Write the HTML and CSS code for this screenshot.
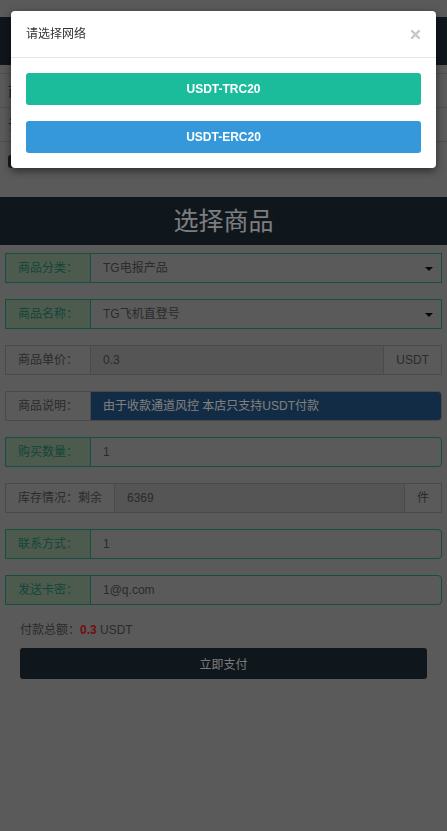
FILE: index.html
```html
<!DOCTYPE html>
<html lang="zh-CN">
<head>
    <meta charset="UTF-8">
    <meta name="viewport" content="width=device-width, initial-scale=1.0">
    <title>选择商品</title>
    <link rel="stylesheet" href="styles.css">
</head>
<body>
    <header class="topbar"></header>

    <ul class="menu">
        <li>商品购买</li>
        <li>订单查询</li>
    </ul>
    <div class="notice"><span class="tag">公告</span></div>

    <h2 class="banner">选择商品</h2>

    <form class="order-form">
        <div class="field field-green">
            <span class="field-label">商品分类：</span>
            <div class="field-select">TG电报产品<span class="caret"></span></div>
        </div>

        <div class="field field-green">
            <span class="field-label">商品名称：</span>
            <div class="field-select">TG飞机直登号<span class="caret"></span></div>
        </div>

        <div class="field">
            <span class="field-label">商品单价：</span>
            <input class="field-input readonly" type="text" value="0.3" readonly>
            <span class="field-addon">USDT</span>
        </div>

        <div class="field rounded">
            <span class="field-label">商品说明：</span>
            <div class="field-desc">由于收款通道风控 本店只支持USDT付款</div>
        </div>

        <div class="field field-green rounded">
            <span class="field-label">购买数量：</span>
            <input class="field-input" type="text" value="1">
        </div>

        <div class="field">
            <span class="field-label">库存情况：剩余</span>
            <input class="field-input readonly" type="text" value="6369" readonly>
            <span class="field-addon">件</span>
        </div>

        <div class="field field-green rounded">
            <span class="field-label">联系方式：</span>
            <input class="field-input" type="text" value="1">
        </div>

        <div class="field field-green rounded">
            <span class="field-label">发送卡密：</span>
            <input class="field-input" type="text" value="1@q.com">
        </div>

        <div class="pay-box">
            <p class="total">付款总额：<b class="amount">0.3</b> USDT</p>
            <button type="button" class="pay-btn">立即支付</button>
        </div>
    </form>

    <!-- network picker popup -->
    <div class="backdrop"></div>
    <div class="modal">
        <div class="modal-header">
            <span class="modal-title">请选择网络</span>
            <span class="modal-close">
                <svg width="9" height="9" viewBox="0 0 9 9">
                    <path d="M1 1 L8 8 M8 1 L1 8" stroke="#c8c8c8" stroke-width="2.4" stroke-linecap="square"/>
                </svg>
            </span>
        </div>
        <div class="modal-body">
            <button type="button" class="net-btn trc">USDT-TRC20</button>
            <button type="button" class="net-btn erc">USDT-ERC20</button>
        </div>
    </div>
</body>
</html>
```

FILE: styles.css
```css
:root {
    --page-bg: #b4b4b4;
    --dark: #1e2c38;
    --green: #2a9e80;
    --green-text: #268c71;
    --green-bg: #9ab69e;
    --gray-border: #949494;
    --text-color: #565656;
}

* {
    box-sizing: border-box;
}

body {
    font-family: "Liberation Sans", "Noto Sans CJK SC", sans-serif;
    font-size: 12px;
    color: var(--text-color);
    background-color: var(--page-bg);
    margin: 0;
    min-height: 100vh;
}

.topbar {
    margin-top: 17px;
    height: 48px;
    background-color: var(--dark);
}

.menu {
    list-style: none;
    margin: 8px 0 0;
    padding: 0;
    border-top: 1px solid #9c9c9c;
}

.menu li {
    height: 34px;
    line-height: 34px;
    padding-left: 8px;
    font-size: 14px;
    color: #333;
    border-bottom: 1px solid #9c9c9c;
}

.notice {
    padding: 12px 8px 0;
    height: 25px;
}

.tag {
    display: inline-block;
    height: 13px;
    line-height: 13px;
    padding: 0 6px;
    font-size: 10px;
    color: #fff;
    background-color: #333;
    border-radius: 3px;
}

.banner {
    margin: 30px 0 0;
    height: 48px;
    line-height: 48px;
    text-align: center;
    font-size: 25px;
    font-weight: normal;
    color: #f8faff;
    background-color: var(--dark);
}

.order-form {
    padding: 8px 5px 0;
}

.field {
    display: flex;
    height: 30px;
    margin-bottom: 16px;
    border: 1px solid var(--gray-border);
    line-height: 28px;
}

.field.rounded {
    border-radius: 0 4px 4px 0;
}

.field-label {
    padding: 0 12px;
    white-space: nowrap;
    border-right: 1px solid var(--gray-border);
}

.field-green {
    border-color: var(--green);
}

.field-green .field-label {
    color: var(--green-text);
    background-color: var(--green-bg);
    border-right-color: var(--green);
}

.field-select {
    flex: 1;
    position: relative;
    padding: 0 12px;
}

.caret {
    position: absolute;
    right: 8px;
    top: 13px;
    border-left: 4px solid transparent;
    border-right: 4px solid transparent;
    border-top: 4px solid #111;
}

.field-input {
    flex: 1;
    min-width: 0;
    height: 100%;
    padding: 0 12px;
    border: none;
    outline: none;
    font: inherit;
    color: var(--text-color);
    background: transparent;
}

.field-input.readonly {
    background-color: #aaa;
}

.field-addon {
    padding: 0 12px;
    border-left: 1px solid var(--gray-border);
}

.field-desc {
    flex: 1;
    padding: 0 12px;
    color: #fff;
    background-color: #26588a;
    border-radius: 0 3px 3px 0;
}

.pay-box {
    padding: 0 15px;
}

.total {
    margin: 15px 0 0;
    line-height: 18px;
}

.amount {
    color: #e02020;
}

.pay-btn {
    display: block;
    width: 100%;
    height: 31px;
    margin-top: 9px;
    border: none;
    border-radius: 3px;
    font: inherit;
    color: #f4f4f4;
    background-color: var(--dark);
}

.backdrop {
    position: fixed;
    inset: 0;
    background-color: rgba(0, 0, 0, 0.5);
}

.modal {
    position: absolute;
    top: 11px;
    left: 11px;
    right: 11px;
    background: #fff;
    border-radius: 4px;
    box-shadow: 0 3px 9px rgba(0, 0, 0, 0.5);
}

.modal-header {
    display: flex;
    align-items: center;
    justify-content: space-between;
    padding: 15px 16px 15px 15px;
    border-bottom: 1px solid #e5e5e5;
}

.modal-title {
    font-size: 12px;
    line-height: 16px;
    color: #333;
}

.modal-close {
    display: flex;
    cursor: pointer;
}

.modal-body {
    display: flex;
    flex-direction: column;
    gap: 16px;
    padding: 15px;
}

.net-btn {
    height: 32px;
    border: none;
    border-radius: 3px;
    font: inherit;
    font-weight: bold;
    color: #fff;
    cursor: pointer;
}

.net-btn.trc {
    background-color: #1abc9c;
}

.net-btn.erc {
    background-color: #3498db;
}
```
